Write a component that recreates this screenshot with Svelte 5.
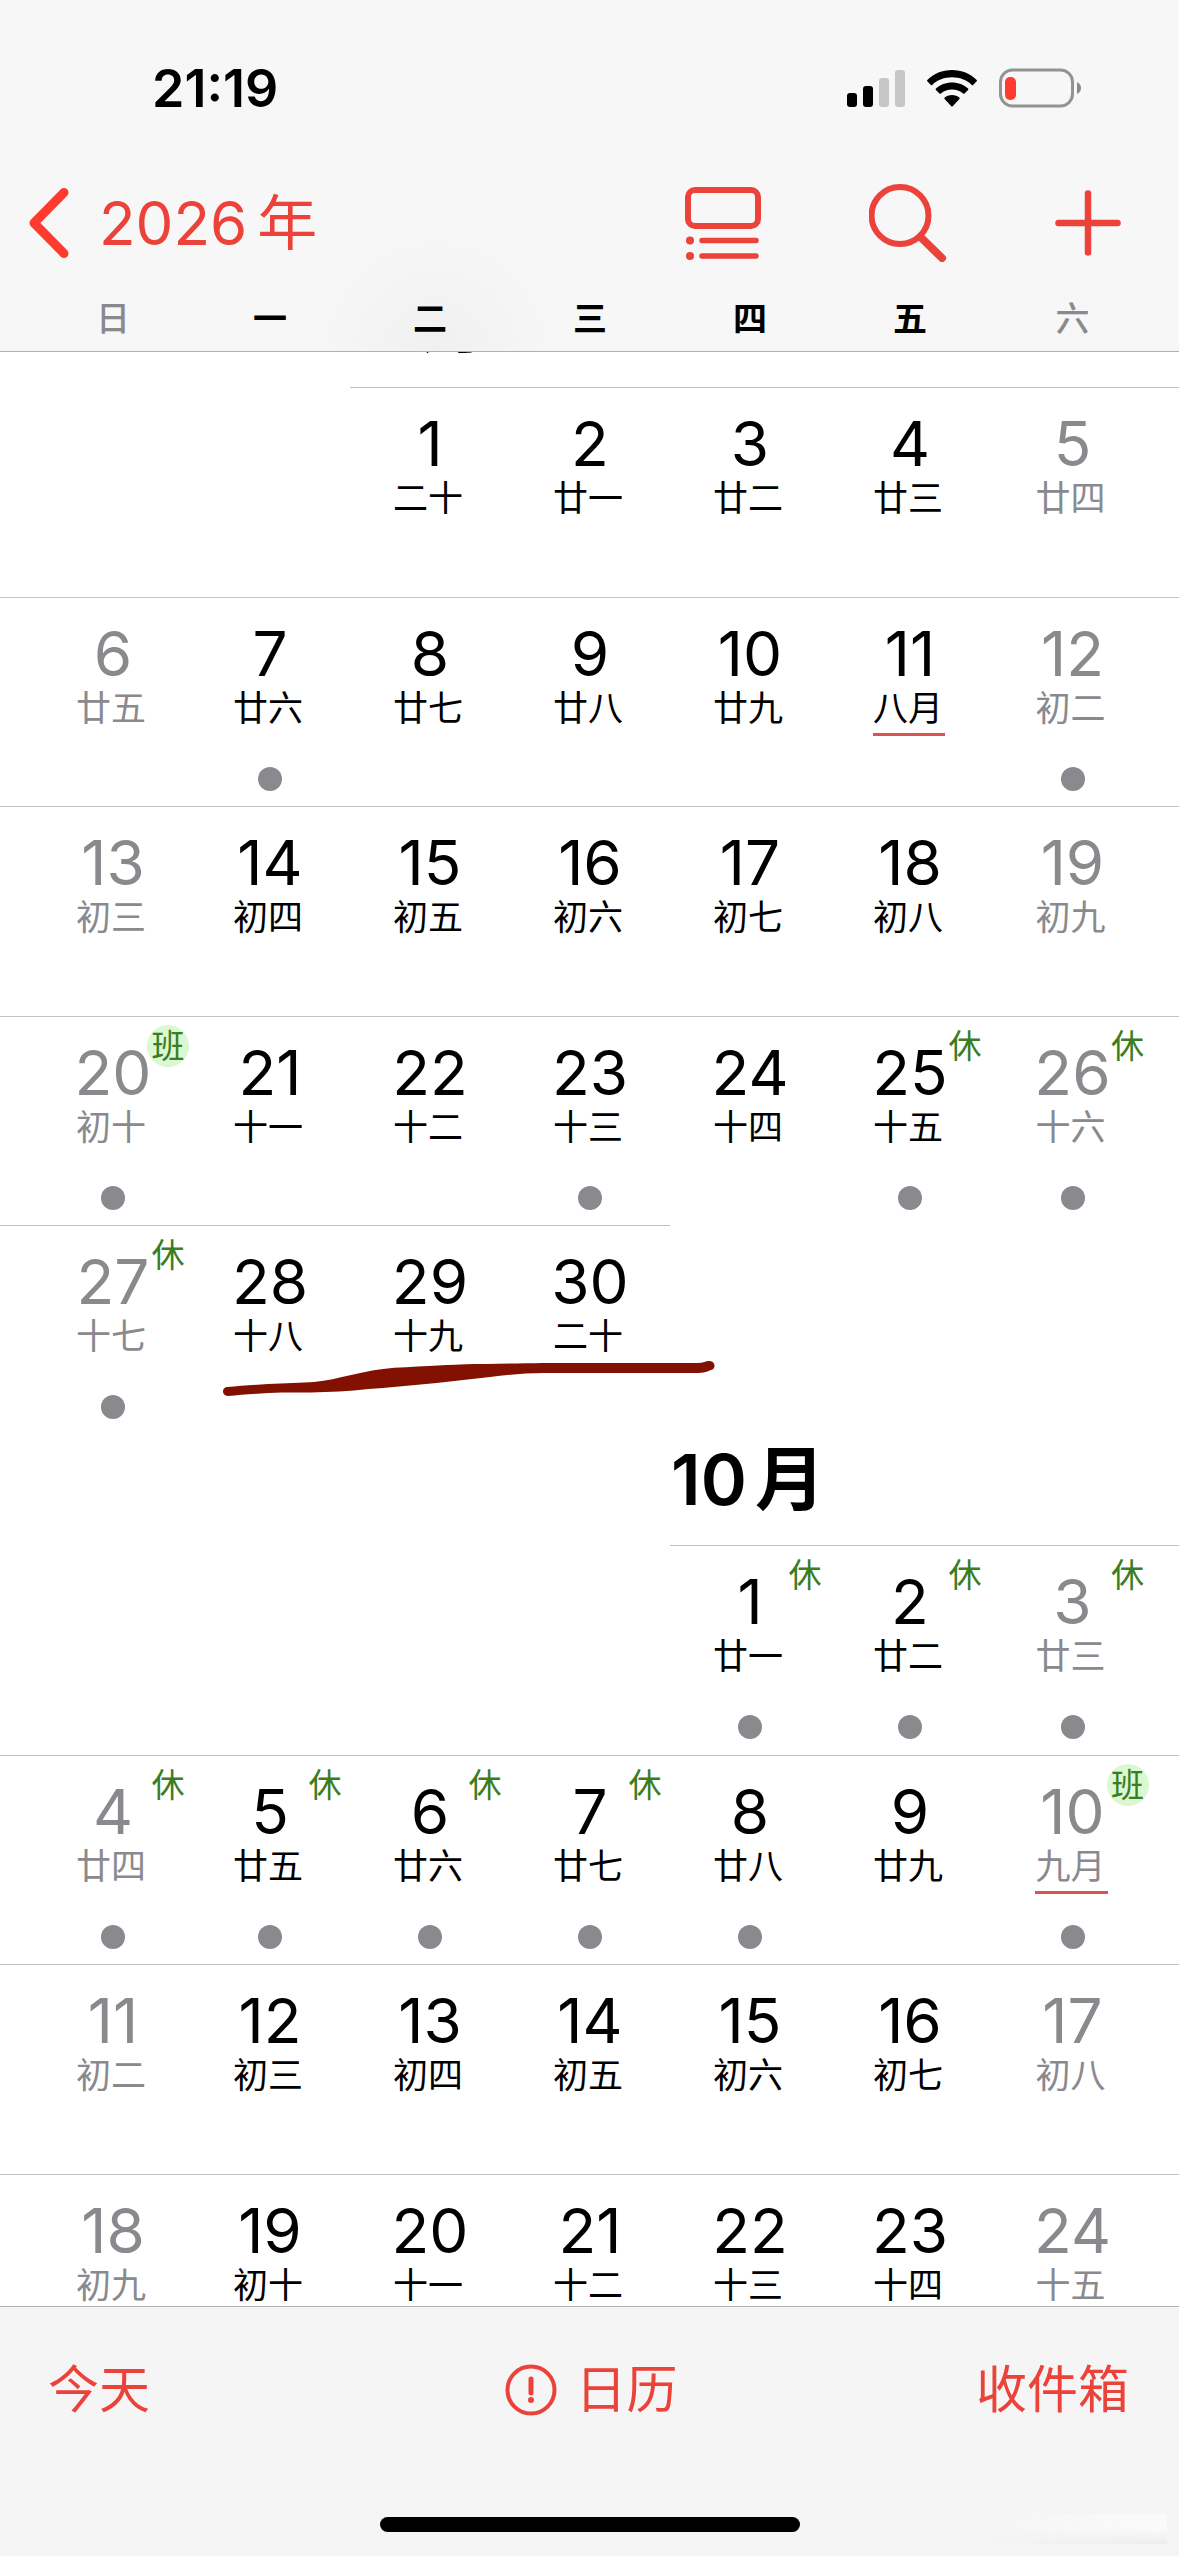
<script lang="ts">
  type Day = {
    num: number;
    lunar: string;
    weekend: boolean;
    badge?: string;
    event?: boolean;
    newMonth?: boolean;
  };

  type Month = {
    month: number;
    start: number;
    lunar: string[];
    off: number[];
    work: number[];
    events: number[];
    newMonth: number;
    marked?: number;
  };

  const weekdays = ['日', '一', '二', '三', '四', '五', '六'];

  const months: Month[] = [
    {
      month: 9,
      start: 2,
      lunar: '二十 廿一 廿二 廿三 廿四 廿五 廿六 廿七 廿八 廿九 八月 初二 初三 初四 初五 初六 初七 初八 初九 初十 十一 十二 十三 十四 十五 十六 十七 十八 十九 二十'.split(' '),
      off: [25, 26, 27],
      work: [20],
      events: [7, 12, 20, 23, 25, 26, 27],
      newMonth: 11,
      marked: 4
    },
    {
      month: 10,
      start: 4,
      lunar: '廿一 廿二 廿三 廿四 廿五 廿六 廿七 廿八 廿九 九月 初二 初三 初四 初五 初六 初七 初八 初九 初十 十一 十二 十三 十四 十五'.split(' '),
      off: [1, 2, 3, 4, 5, 6, 7],
      work: [10],
      events: [1, 2, 3, 4, 5, 6, 7, 8, 10],
      newMonth: 10
    }
  ];

  function getWeeks(m: Month): (Day | null)[][] {
    const cells: (Day | null)[] = Array(m.start).fill(null);
    m.lunar.forEach((lunar, i) => {
      const num = i + 1;
      const col = (m.start + i) % 7;
      cells.push({
        num,
        lunar,
        weekend: col === 0 || col === 6,
        badge: m.off.includes(num) ? '休' : m.work.includes(num) ? '班' : undefined,
        event: m.events.includes(num),
        newMonth: m.newMonth === num
      });
    });
    while (cells.length % 7) cells.push(null);

    const weeks = [];
    for (let i = 0; i < cells.length; i += 7) weeks.push(cells.slice(i, i + 7));
    return weeks;
  }
</script>

<div class="screen">
  <header>
    <div class="status">
      <time>21:19</time>
      <div class="indicators">
        <svg width="58" height="38" viewBox="0 0 58 38">
          <rect x="0" y="24" width="10" height="14" rx="3" />
          <rect x="16" y="17" width="10" height="21" rx="3" />
          <rect x="32" y="9" width="10" height="29" rx="3" fill="#c6c6c6" />
          <rect x="48" y="1" width="10" height="37" rx="3" fill="#c6c6c6" />
        </svg>
        <svg width="50" height="38" viewBox="0 0 50 38">
          <path d="M25 1C34.600 1 43.300 4.600 49.700 10.900C50.100 11.300 50.100 11.900 49.700 12.300L46.100 15.900C45.700 16.300 45.100 16.300 44.700 15.900C39.600 11 32.700 8.300 25 8.300S10.400 11 5.300 15.900C4.900 16.300 4.300 16.300 3.900 15.900L.3 12.300C-.1 11.900-.1 11.300.3 10.900C6.700 4.600 15.400 1 25 1Z" />
          <path d="M25 13.500C31.300 13.500 36.900 15.800 41.100 19.500C41.500 19.900 41.500 20.500 41.100 20.900L37.500 24.600C37.100 25 36.500 25 36.100 24.600C33.100 22.100 29.300 20.600 25 20.600S16.900 22.100 13.900 24.600C13.500 25 12.900 25 12.500 24.600L8.900 20.900C8.500 20.500 8.500 19.900 8.900 19.500C13.100 15.800 18.700 13.500 25 13.500Z" />
          <path d="M25 26C27.800 26 30.400 27 32.400 28.500C32.800 28.900 32.800 29.500 32.400 30L25.700 37.300C25.300 37.700 24.700 37.700 24.300 37.300L17.600 30C17.200 29.500 17.200 28.900 17.600 28.500C19.600 27 22.200 26 25 26Z" />
        </svg>
        <svg width="82" height="40" viewBox="0 0 82 40">
          <rect x="1.500" y="2" width="72" height="36" rx="12" fill="none" stroke="#929494" stroke-width="3" />
          <path d="M78 14Q82 16 82 20T78 26Z" fill="#8a8b8b" />
          <rect x="6" y="9" width="11" height="23" rx="5" fill="#ff3b30" />
        </svg>
      </div>
    </div>

    <nav>
      <button class="back">
        <svg width="42" height="72" viewBox="0 0 42 72">
          <path d="M36 5.500L6 36L36 66.500" stroke-width="9" />
        </svg>
        <span>2026</span>
        <span>年</span>
      </button>
      <div class="actions">
        <button aria-label="列表">
          <svg width="76" height="76" viewBox="0 0 76 76">
            <rect x="3" y="5" width="70" height="36" rx="7" stroke-width="6" />
            <path d="M17 55.500H71M17 71H71" stroke-width="5.500" />
            <circle class="solid" cx="5" cy="55.500" r="4" />
            <circle class="solid" cx="5" cy="71" r="4" />
          </svg>
        </button>
        <button aria-label="搜索">
          <svg width="78" height="78" viewBox="0 0 78 78">
            <circle cx="31" cy="31.500" r="28.500" stroke-width="6" />
            <path d="M51.500 53L73 74" stroke-width="8" />
          </svg>
        </button>
        <button aria-label="添加">
          <svg width="66" height="66" viewBox="0 0 66 66">
            <path d="M33 3.500V62.500M3.500 33H62.500" stroke-width="6.500" />
          </svg>
        </button>
      </div>
    </nav>

    <div class="row weekdays">
      {#each weekdays as name, i}
        <div class="cell" class:weekend={i === 0 || i === 6}>{name}</div>
      {/each}
    </div>
  </header>

  <main>
    <div class="months">
      {#each months as m}
        <section>
          <div class="row title">
            <h2 style="grid-column: {m.start + 1}">
              <span>{m.month}</span>
              <span>月</span>
            </h2>
          </div>
          {#each getWeeks(m) as week, w}
            <div class="row week">
              {#each week as day}
                {#if day}
                  <div class="cell filled" class:weekend={day.weekend}>
                    <button class="day">
                      <span class="num">{day.num}</span>
                      <span class="lunar" class:new-month={day.newMonth}>{day.lunar}</span>
                      {#if day.badge}
                        <span class="badge" class:work={day.badge === '班'}>{day.badge}</span>
                      {/if}
                      {#if day.event}
                        <span class="dot"></span>
                      {/if}
                    </button>
                  </div>
                {:else}
                  <div class="cell"></div>
                {/if}
              {/each}
              {#if m.marked === w}
                <svg class="marker" viewBox="0 0 1179 60">
                  <path d="M227 37C240 36 253 35 268 34C285 33 302 33 314 32C341 29 357 22 383 19C398 17 414 17 429 16C459 14 490 14 543 13H698C703 13 706 11 709 11C716 11 716 19 711 20C707 22 703 23 698 23H543C526 23 508 25 490 27C454 31 419 35 383 38C364 39 344 42 325 42C306 43 287 42 268 43C253 44 240 45 228 46C222 46 221 38 227 37Z" />
                </svg>
              {/if}
            </div>
          {/each}
        </section>
      {/each}
    </div>
  </main>

  <footer>
    <div class="toolbar">
      <button>今天</button>
      <button class="calendars">
        <svg width="52" height="52" viewBox="0 0 52 52">
          <circle cx="26" cy="26" r="23.500" stroke-width="4" />
          <path d="M26 15V29" stroke-width="5" />
          <circle class="solid" cx="26" cy="36" r="3" />
        </svg>
        日历
      </button>
      <button class="inbox">收件箱</button>
    </div>
    <div class="home"></div>
    <div class="smudge"></div>
  </footer>
</div>

<style>
  :global(body) {
    margin: 0;
    background: #fff;
  }

  .screen {
    --red: #eb4239;
    --gray: #8a8a8e;
    display: flex;
    flex-direction: column;
    height: 100vh;
    overflow: hidden;
    color: #000;
    font-family: Inter, 'Noto Sans CJK SC', sans-serif;
  }

  button {
    padding: 0;
    border: 0;
    background: none;
    color: inherit;
    font: inherit;
    cursor: pointer;
  }

  svg {
    display: block;
  }

  header {
    position: relative;
    z-index: 1;
    flex: none;
    background: radial-gradient(circle at 37% 100%, #f0f0f0, #f7f7f7 130px);
    border-bottom: 1px solid #b0b0b0;
  }

  .status {
    display: flex;
    align-items: center;
    justify-content: space-between;
    height: 176px;
    padding: 0 98px 0 152px;
  }

  .status time {
    font-size: 52px;
    font-weight: 600;
  }

  .indicators {
    display: flex;
    align-items: center;
    gap: 22px;
  }

  nav {
    display: flex;
    align-items: center;
    justify-content: space-between;
    height: 94px;
    padding: 0 58px 0 28px;
    color: var(--red);
  }

  nav svg,
  .toolbar svg {
    fill: none;
    stroke: currentColor;
    stroke-linecap: round;
    stroke-linejoin: round;
  }

  .solid {
    fill: currentColor;
    stroke: none;
  }

  .back {
    display: flex;
    align-items: center;
    font-size: 60px;
    line-height: 72px;
  }

  .back svg {
    margin-right: 29px;
    color: #ff3b30;
  }

  .back span + span {
    margin-left: 10px;
  }

  .actions {
    display: flex;
    align-items: center;
    gap: 108px;
  }

  .row {
    position: relative;
    display: grid;
    grid-template-columns: 190fr repeat(5, 160fr) 189fr;
  }

  .cell {
    box-sizing: border-box;
    min-width: 0;
    text-align: center;
  }

  .cell:first-child {
    padding-left: 36px;
  }

  .cell:nth-child(7) {
    padding-right: 24px;
  }

  .weekend {
    color: var(--gray);
  }

  .weekdays {
    padding-top: 17px;
    font-size: 34px;
    font-weight: 700;
    line-height: 64px;
  }

  .weekdays .weekend {
    font-weight: 500;
  }

  main {
    flex: 1;
    min-height: 0;
    overflow: hidden;
  }

  /* scrolled so that the first title sits under the header */
  .months {
    margin-top: -75px;
  }

  .title {
    height: 110px;
  }

  h2 {
    display: flex;
    align-items: flex-start;
    justify-content: center;
    min-width: 0;
    margin: 0 4px 0 0;
    font-size: 70px;
    font-weight: 600;
    line-height: 90px;
  }

  h2 span + span {
    margin-left: 8px;
  }

  .week {
    aspect-ratio: 45 / 8;
  }

  .filled {
    border-top: 1px solid #c2c2c4;
  }

  .day {
    position: relative;
    display: flex;
    flex-direction: column;
    align-items: center;
    justify-content: flex-start;
    width: 100%;
    height: 100%;
    padding-top: 24px;
  }

  .num {
    font-size: 62px;
    line-height: 64px;
  }

  .lunar {
    position: relative;
    margin-right: 4px;
    font-size: 35px;
    line-height: 44px;
  }

  .new-month::after {
    content: '';
    position: absolute;
    inset: auto -2px -6px 0;
    height: 3px;
    background: #d9534f;
  }

  .dot {
    width: 24px;
    height: 24px;
    margin-top: 37px;
    border-radius: 50%;
    background: var(--gray);
  }

  .badge {
    position: absolute;
    top: 8px;
    left: calc(50% + 34px);
    width: 42px;
    border-radius: 50%;
    color: #3a7d22;
    font-size: 33px;
    line-height: 42px;
  }

  .work {
    background: #dcf8d2;
  }

  .marker {
    position: absolute;
    top: 125px;
    left: 0;
    width: 100%;
    fill: #821102;
    pointer-events: none;
  }

  footer {
    position: relative;
    z-index: 1;
    flex: none;
    box-sizing: border-box;
    height: 250px;
    border-top: 1px solid #b0b0b0;
    background: #f5f5f5;
  }

  .toolbar {
    display: grid;
    grid-template-columns: 1fr auto 1fr;
    align-items: center;
    padding: 48px 50px 0 48px;
    color: var(--red);
    font-size: 51px;
    line-height: 70px;
  }

  .toolbar button {
    justify-self: start;
  }

  .toolbar .inbox {
    justify-self: end;
  }

  .toolbar .calendars {
    display: flex;
    align-items: center;
    gap: 18px;
    padding-left: 6px;
  }

  .home {
    position: absolute;
    bottom: 24px;
    left: 50%;
    width: 420px;
    height: 15px;
    border-radius: 8px;
    background: #000;
    transform: translateX(-50%);
  }

  .smudge {
    position: absolute;
    right: 12px;
    bottom: 12px;
    width: 186px;
    height: 30px;
    background: linear-gradient(#fafafa 50%, #ececec);
    mask-image: linear-gradient(to right, transparent, #000);
  }
</style>
